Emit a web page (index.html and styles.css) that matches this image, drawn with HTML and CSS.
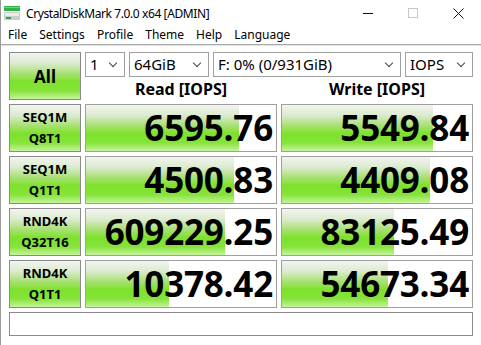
FILE: index.html
```html
<!DOCTYPE html>
<html lang="en">
<head>
    <meta charset="UTF-8">
    <title>CrystalDiskMark 7.0.0 x64 [ADMIN]</title>
    <link rel="stylesheet" href="styles.css">
</head>
<body>
    <div class="window">
        <div class="titlebar">
            <svg class="app-icon" width="16" height="14" viewBox="0 0 16 14">
                <rect x="0" y="0" width="16" height="5" fill="#2fb24c"/>
                <rect x="0" y="1" width="16" height="1" fill="#6fd67e"/>
                <rect x="0" y="6" width="16" height="8" fill="#c9cfcb"/>
                <rect x="1" y="7" width="14" height="3" fill="#e9ecea"/>
                <rect x="2" y="11" width="5" height="2" fill="#3d9a57"/>
            </svg>
            <div class="title">CrystalDiskMark 7.0.0 x64 [ADMIN]</div>
            <div class="controls">
                <span class="ctl ctl-min"></span>
                <span class="ctl ctl-max"></span>
                <svg class="ctl-close" width="11" height="11" viewBox="0 0 11 11">
                    <path d="M0.5 0.5 L10.5 10.5 M10.5 0.5 L0.5 10.5" stroke="#111" stroke-width="1"/>
                </svg>
            </div>
        </div>

        <div class="menubar">
            <span>File</span>
            <span>Settings</span>
            <span>Profile</span>
            <span>Theme</span>
            <span>Help</span>
            <span>Language</span>
        </div>

        <div class="main">
            <div class="btn btn-all">All</div>

            <div class="top">
                <div class="combos">
                    <div class="combo c-count">1</div>
                    <div class="combo c-size">64GiB</div>
                    <div class="combo c-drive">F: 0% (0/931GiB)</div>
                    <div class="combo c-unit">IOPS</div>
                </div>
                <div class="headers">
                    <div class="head">Read [IOPS]</div>
                    <div class="head">Write [IOPS]</div>
                </div>
            </div>

            <div class="btn btn-test">SEQ1M<br>Q8T1</div>
            <div class="cell" style="--w: 153px">6595.76</div>
            <div class="cell" style="--w: 151px">5549.84</div>

            <div class="btn btn-test">SEQ1M<br>Q1T1</div>
            <div class="cell" style="--w: 148px">4500.83</div>
            <div class="cell" style="--w: 148px">4409.08</div>

            <div class="btn btn-test">RND4K<br>Q32T16</div>
            <div class="cell" style="--w: 139px">609229.25</div>
            <div class="cell" style="--w: 112px">83125.49</div>

            <div class="btn btn-test">RND4K<br>Q1T1</div>
            <div class="cell" style="--w: 83px">10378.42</div>
            <div class="cell" style="--w: 106px">54673.34</div>

            <div class="statusbar"></div>
        </div>
    </div>
</body>
</html>
```

FILE: styles.css
```css
* {
    margin: 0;
    padding: 0;
    box-sizing: border-box;
}

body {
    width: 481px;
    height: 345px;
    overflow: hidden;
    background: #fff;
    font-family: 'Noto Sans', 'Open Sans', sans-serif;
    color: #000;
}

.window {
    height: 345px;
    border-left: 1px solid #9a9a9a;
}

/* title bar */
.titlebar {
    height: 24px;
    display: flex;
    align-items: center;
    padding-left: 3px;
    padding-top: 2px;
}

.app-icon {
    margin-right: 6px;
}

.title {
    font-size: 12px;
    letter-spacing: -0.4px;
    flex: 1;
}

.controls {
    display: flex;
    align-items: center;
    padding-right: 17px;
}

.ctl-min {
    width: 10px;
    height: 1px;
    background: #111;
    margin-right: 35px;
}

.ctl-max {
    width: 10px;
    height: 10px;
    border: 1px solid #c8c8c8;
    margin-right: 35px;
}

/* menu */
.menubar {
    height: 21px;
    display: flex;
    align-items: center;
    gap: 12px;
    padding-left: 7px;
    padding-top: 1px;
    font-size: 12px;
    border-bottom: 1px solid #a8a8a8;
    box-shadow: 0 1px 0 #e4e4e4;
}

/* benchmark area */
.main {
    display: grid;
    grid-template-columns: 72px 192px 192px;
    grid-template-rows: 48px 48px 48px 48px 48px 24px;
    gap: 4px;
    padding: 7px 0 0 8px;
}

.btn {
    border: 1px solid #8a8a8a;
    background: linear-gradient(#f2f4f0 0%, #dcebd0 22%, #a8e073 45%, #7ee22c 62%, #86e33a 82%, #c6f39c 100%);
    display: flex;
    align-items: center;
    justify-content: center;
    text-align: center;
    font-weight: bold;
}

.btn-all {
    font-size: 17px;
}

.btn-test {
    font-size: 13px;
    line-height: 21px;
}

.top {
    grid-column: 2 / 4;
    display: flex;
    flex-direction: column;
}

.combos {
    display: flex;
    gap: 4px;
    height: 25px;
}

.combo {
    border: 1px solid #a0a0a0;
    background: #fff;
    font-size: 15px;
    line-height: 23px;
    padding-left: 4px;
    position: relative;
}

.combo::after {
    content: "";
    position: absolute;
    right: 8px;
    top: 7px;
    width: 5px;
    height: 5px;
    border-right: 1px solid #444;
    border-bottom: 1px solid #444;
    transform: rotate(45deg);
}

.c-count { width: 40px; }
.c-size { width: 80px; }
.c-drive { width: 188px; }
.c-unit { width: 68px; }

.headers {
    display: grid;
    grid-template-columns: 192px 192px;
    gap: 4px;
    flex: 1;
}

.head {
    font-size: 16px;
    font-weight: bold;
    text-align: center;
    line-height: 23px;
    padding-top: 1px;
}

.cell {
    border: 1px solid #a0a0a0;
    background: linear-gradient(#f2f4f0 0%, #dcebd0 22%, #a8e073 45%, #7ee22c 62%, #86e33a 82%, #c6f39c 100%) no-repeat;
    background-size: var(--w) 100%;
    font-family: 'Open Sans', 'Noto Sans', sans-serif;
    font-size: 35px;
    font-weight: bold;
    line-height: 46px;
    text-align: right;
    padding-right: 3px;
    letter-spacing: -0.2px;
}

.statusbar {
    grid-column: 1 / 4;
    border: 1px solid #8a8a8a;
    background: #fff;
}
```
